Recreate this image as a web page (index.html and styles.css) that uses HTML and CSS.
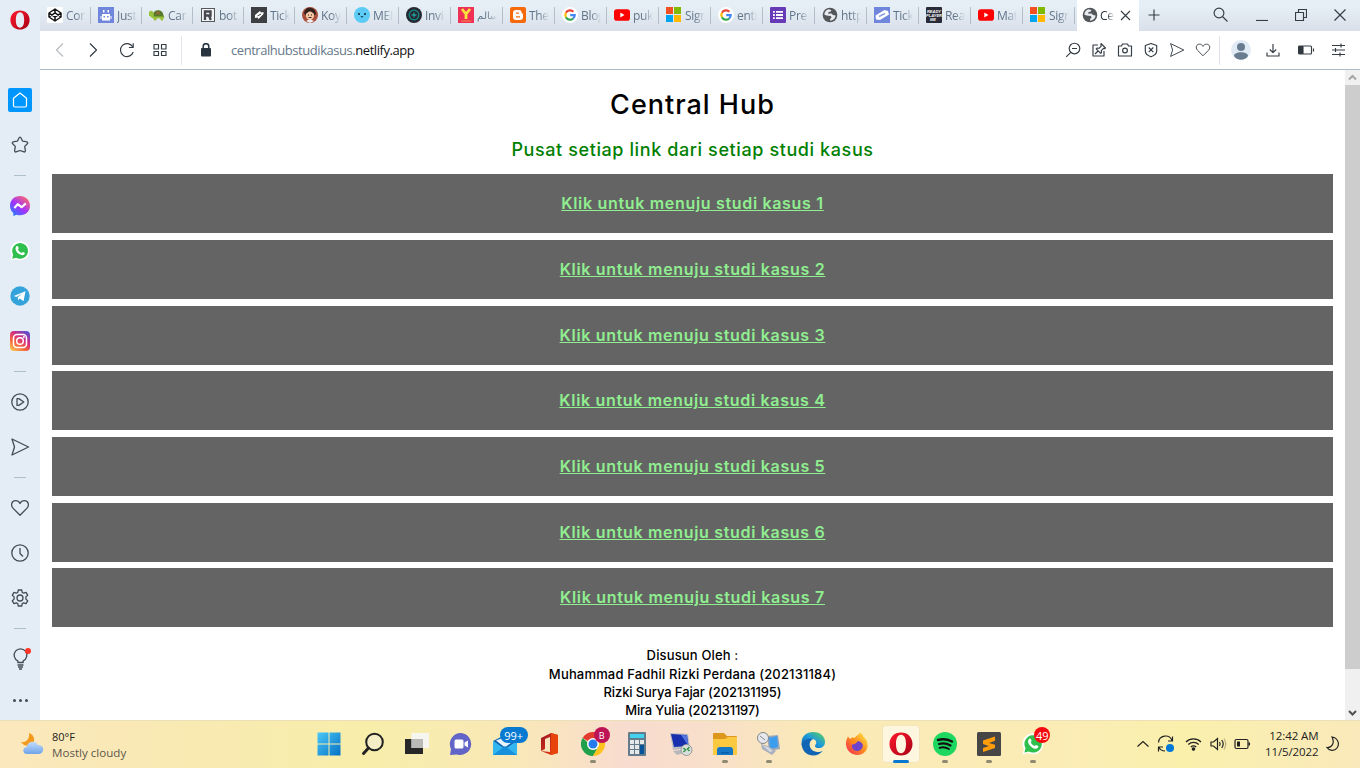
FILE: index.html
```html
<!DOCTYPE html>
<html lang="id">
<head>
<meta charset="utf-8">
<title>Central Hub</title>
<link rel="stylesheet" href="styles.css">
</head>
<body>
<svg class="defs" width="0" height="0">
  <defs>
    <linearGradient id="gOpera" x1="0" y1="0" x2="1" y2="1"><stop offset="0" stop-color="#ff1b2d"/><stop offset="1" stop-color="#a70014"/></linearGradient>
    <linearGradient id="gMsg" x1="0" y1="1" x2=".8" y2="0"><stop offset="0" stop-color="#0a8cff"/><stop offset=".5" stop-color="#a033ff"/><stop offset="1" stop-color="#ff6a6a"/></linearGradient>
    <linearGradient id="gIg" x1=".1" y1="1" x2=".8" y2="0"><stop offset="0" stop-color="#fdc950"/><stop offset=".35" stop-color="#f5653c"/><stop offset=".65" stop-color="#d42d82"/><stop offset="1" stop-color="#5b4fd0"/></linearGradient>
    <linearGradient id="gWin" x1="0" y1="0" x2="1" y2="1"><stop offset="0" stop-color="#4dc8f7"/><stop offset="1" stop-color="#0571c5"/></linearGradient>
    <linearGradient id="gEdge" x1="0" y1="1" x2="1" y2="0"><stop offset="0" stop-color="#0c59a4"/><stop offset=".5" stop-color="#1e9bdc"/><stop offset="1" stop-color="#62d452"/></linearGradient>
    <linearGradient id="gFox" x1="1" y1="0" x2="0" y2="1"><stop offset="0" stop-color="#fff04a"/><stop offset=".5" stop-color="#ff8a1e"/><stop offset="1" stop-color="#ef2259"/></linearGradient>
    <linearGradient id="gOffice" x1="0" y1="0" x2="1" y2="1"><stop offset="0" stop-color="#9c1222"/><stop offset="1" stop-color="#ef4a10"/></linearGradient>
    <linearGradient id="gCloud" x1="0" y1="0" x2="0" y2="1"><stop offset="0" stop-color="#c4dcfb"/><stop offset="1" stop-color="#6fa4ea"/></linearGradient>
    <symbol id="opera" viewBox="0 0 24 24"><path fill="url(#gOpera)" fill-rule="evenodd" d="M12 .5C5.200.5.500 5.300.500 12S5.200 23.500 12 23.500 23.500 18.700 23.500 12 18.800.5 12 .5ZM12 2.800C15.300 2.800 17 6.500 17 12S15.300 21.200 12 21.200 7 17.500 7 12 8.700 2.800 12 2.800Z"/></symbol>
    <symbol id="google" viewBox="0 0 16 16"><circle cx="8" cy="8" r="8" fill="#fff"/><g fill="none" stroke-width="2.200"><path stroke="#ea4335" d="M3.900 5.800A4.700 4.700 0 0 1 11.400 4.700"/><path stroke="#fbbc05" d="M3.900 5.800a4.700 4.700 0 0 0 0 4.400"/><path stroke="#34a853" d="M3.900 10.200a4.700 4.700 0 0 0 7.300 1.300"/><path stroke="#4285f4" d="M8.200 8.200h4.500a4.700 4.700 0 0 1-1.500 3.300"/></g></symbol>
    <symbol id="youtube" viewBox="0 0 16 16"><rect y="2.300" width="16" height="11.400" rx="2.800" fill="#f00"/><path fill="#fff" d="M6.300 5.600v4.800L10.500 8z"/></symbol>
    <symbol id="ms" viewBox="0 0 16 16"><path fill="#f25022" d="M0 0h7v7H0z"/><path fill="#7fba00" d="M8 0h7v7H8z"/><path fill="#00a4ef" d="M0 8h7v7H0z"/><path fill="#ffb900" d="M8 8h7v7H8z"/></symbol>
    <symbol id="globe" viewBox="0 0 16 16"><circle cx="8" cy="8" r="7.300" fill="#54575a"/><path fill="#e8ecf1" d="M6.500 2.200C4 3 2.500 5 2.300 7.500L4.500 8.600l4.300.4.800 1.500-1.300 1.200-.3 2.100c3-.1 5.300-2.300 5.600-5.200L11 8 9.500 6.500l-3 .2-.3-1.500 2.600-.8.500-1.500z"/></symbol>
    <symbol id="wa" viewBox="0 0 20 20"><path fill="#fff" d="M.5 19.500 1.700 14.500A9.500 9.500 0 1 1 5.500 18.200Z"/><path fill="#2fbf4c" d="M2.200 17.800l1-4A7.900 7.900 0 1 1 6.200 16.800Z"/><path fill="#fff" d="M6.300 5.400c.6-.7 1.500-.6 1.800.2l.6 1.500c.2.500-.6 1-.7 1.400.6 1.500 1.800 2.700 3.400 3.400.5-.1 1-1.100 1.500-.9l1.600.8c.6.300.3 1.300-.2 1.800-1.200 1.200-3.300.7-5.200-.5-1.700-1.100-3.200-3-3.500-4.700-.2-1.200.1-2.300.7-3z"/></symbol>
    <symbol id="heart" viewBox="0 0 20 20"><path d="M10 17.200 3.200 10.400C0 6.700 2 2.700 5.600 2.700 7.800 2.700 9.200 3.900 10 5.500 10.800 3.900 12.200 2.700 14.400 2.700c3.600 0 5.600 4 2.400 7.700Z"/></symbol>
    <symbol id="send" viewBox="0 0 20 20"><path d="M2 2 18.500 10 2 18 4.500 10Z"/></symbol>
  </defs>
</svg>

<div class="browser">
  <aside class="sidebar">
    <div class="side-logo"><svg width="20" height="20"><use href="#opera"/></svg></div>
    <div class="side-item"><span class="home"><svg class="ln light" width="20" height="20" viewBox="0 0 20 20"><path d="M3.500 8.300 10 3l6.500 5.300V15.500a1.500 1.500 0 0 1-1.500 1.500H5a1.500 1.500 0 0 1-1.500-1.500Z"/></svg></span></div>
    <div class="side-item"><svg class="ln" width="20" height="20" viewBox="0 0 20 20"><path d="M10 2.200c.7 0 1 .6 1.400 1.500l1.100 2.400 3.400.5c2 .3 2.400 1.300 1.200 2.400l-2.400 2.400.6 3.700c.3 1.800-.5 2.300-2 1.600L10 15.500l-3.300 1.200c-1.500.7-2.300.2-2-1.600l.6-3.700L2.900 9c-1.200-1.100-.8-2.100 1.200-2.400l3.400-.5 1.100-2.400C9 2.800 9.300 2.200 10 2.200Z"/></svg></div>
    <div class="side-sep"></div>
    <div class="side-item"><svg width="20" height="20" viewBox="0 0 20 20"><path fill="url(#gMsg)" d="M10 0C4.300 0 0 4.200 0 9.700c0 2.900 1.200 5.400 3.200 7.100L3.400 20l3-1.300c1.100.4 2.300.5 3.600.5 5.700 0 10-4.100 10-9.500S15.700 0 10 0Z"/><path fill="none" stroke="#fff" stroke-width="2.100" stroke-linejoin="round" d="m4.300 12 3.400-3.800 3.900 3 4.200-3.800"/></svg></div>
    <div class="side-item"><svg width="20" height="20"><use href="#wa"/></svg></div>
    <div class="side-item"><svg width="20" height="20" viewBox="0 0 20 20"><circle cx="10" cy="10" r="9.700" fill="#34a3dc"/><path fill="#fff" d="M3.800 9.900 15.500 5.200l-2 10-3.600-2.600-1.700 1.700-.5-3.100 4.700-3.900L6.400 11z"/></svg></div>
    <div class="side-item"><svg width="20" height="20" viewBox="0 0 20 20"><rect width="20" height="20" rx="4" fill="url(#gIg)"/><g fill="none" stroke="#fff" stroke-width="1.500"><rect x="3.500" y="3.500" width="13" height="13" rx="3.500"/><circle cx="10" cy="10" r="3.300"/></g><circle cx="13.900" cy="6.100" r="1" fill="#fff"/></svg></div>
    <div class="side-sep"></div>
    <div class="side-item"><svg class="ln" width="20" height="20" viewBox="0 0 20 20"><circle cx="10" cy="10" r="8.200"/><path d="M7 6.600v6.800h1.800L13.800 10 8.800 6.600Z"/></svg></div>
    <div class="side-item"><svg class="ln" width="20" height="20"><use href="#send"/></svg></div>
    <div class="side-sep"></div>
    <div class="side-item"><svg class="ln" width="20" height="20"><use href="#heart"/></svg></div>
    <div class="side-item"><svg class="ln" width="20" height="20" viewBox="0 0 20 20"><circle cx="10" cy="10" r="8.200"/><path d="M10 5v5.500l3 3"/></svg></div>
    <div class="side-item"><svg class="ln" width="20" height="20" viewBox="0 0 20 20"><circle cx="10" cy="10" r="3"/><path d="M8.300 2h3.400l.5 2.400 1.500.8 2.300-.9 1.700 2.900-1.800 1.700v2.200l1.800 1.700-1.700 2.900-2.300-.9-1.500.8-.5 2.400H8.300l-.5-2.400-1.500-.8-2.300.9-1.700-2.900 1.800-1.700V8.900L2.300 7.200 4 4.300l2.300.9 1.500-.8Z"/></svg></div>
    <div class="side-sep"></div>
    <div class="side-item bulb"><svg class="ln" width="20" height="22" viewBox="0 0 20 22"><path d="M7.800 14.500v-1.700A6.300 6.300 0 1 1 13.200 12.800v1.700ZM7.500 17h6M8 19h5M9 21h3"/></svg><i class="dot"></i></div>
    <div class="side-more"><i></i><i></i><i></i></div>
  </aside>

  <div class="main">
    <div class="tabs">
      <div class="tab narrow"><svg width="16" height="16" viewBox="0 0 16 16"><rect width="16" height="16" rx="1" fill="#fff"/><g fill="none" stroke="#111" stroke-width="1.500" stroke-linejoin="round"><path d="M8 2 14 6v4L8 14 2 10V6ZM8 2v3.800M8 10.200V14M2 6l6 4.200L14 6M2 10l6-4.200L14 10"/></g></svg><span>Cor</span></div>
      <div class="tab narrow"><svg width="16" height="16" viewBox="0 0 16 16"><rect width="16" height="16" fill="#6f86dc"/><path fill="#fff" d="M4 7h8v6.500H4zM5 3h1.500v2.500H5zM9.500 3H11v2.500H9.500zM2.500 9h1v3h-1zM12.500 9h1v3h-1z"/><path fill="#6f86dc" d="M5.500 9h1.500v1.500H5.500zM9 9h1.500v1.500H9z"/></svg><span>Just</span></div>
      <div class="tab narrow"><svg width="16" height="16" viewBox="0 0 16 16"><path fill="#557a2b" d="M4 8.500c0-7 10-7 10.500 0l1 2H4z"/><path fill="#9ac13c" d="M0 6c0-3 4-3 4.500 0l.5 3.500h10l-1 4h-2l-1-2H8l-1 2H5l-.5-2C2 11 2 9 0 9z"/><path fill="#8a6b35" d="m7 5 2-1 2 1v2L9 8 7 7z"/></svg><span>Car</span></div>
      <div class="tab narrow"><svg width="16" height="16" viewBox="0 0 16 16"><rect x="1.500" y="1.500" width="13" height="13" fill="#f3f4f6" stroke="#55595e"/><path fill="none" stroke="#45494f" stroke-width="2.400" d="M5 13V4.500h5.500v4H5M9 8.500l1.800 4.500"/></svg><span>bot</span></div>
      <div class="tab narrow"><svg width="16" height="16" viewBox="0 0 16 16"><rect width="16" height="16" fill="#3d3f42"/><path fill="#fff" d="m4 8 5-4 1 1.500 2.500-.5v2L7.500 12 6.500 10.500l-2.500.5z"/><path stroke="#3d3f42" d="m6.500 9 3.500-2"/></svg><span>Tick</span></div>
      <div class="tab"><svg width="16" height="16" viewBox="0 0 16 16"><circle cx="8" cy="8" r="8" fill="#a94d3b"/><path fill="#35211c" d="M2 6c1-7 11-7 12 1l-2 2H4z"/><circle cx="8" cy="8.500" r="4.200" fill="#f3c5a3"/><path fill="#35211c" d="M4 6.500 8 4l4 2.500V4L8 2 4 4z"/><path stroke="#3b2020" d="M6 8h1M9 8h1M6.500 10.500h3"/><path fill="#eee" d="m4 14 4-2 4 2-4 2z"/></svg><span>Koy</span></div>
      <div class="tab"><svg width="16" height="16" viewBox="0 0 16 16"><circle cx="8" cy="8" r="8" fill="#5ccbf5"/><circle cx="5" cy="7" r="1" fill="#123"/><circle cx="11" cy="7" r="1" fill="#123"/><path stroke="#123" fill="none" d="M6.800 9.500q1.200 1 2.400 0"/></svg><span>MEE</span></div>
      <div class="tab"><svg width="16" height="16" viewBox="0 0 16 16"><circle cx="8" cy="8" r="8" fill="#252a31"/><circle cx="8" cy="8" r="4.800" fill="none" stroke="#168d92" stroke-width="1.200"/><path fill="none" stroke="#2bb9ba" d="M8 5.500v5M5.500 8h5"/></svg><span>Invi</span></div>
      <div class="tab"><svg width="16" height="16" viewBox="0 0 16 16"><rect width="16" height="16" fill="#ee3154"/><path fill="none" stroke="#fbe23c" stroke-width="2.800" d="m4 2 4 5 4-5M8 7v5"/><path stroke="#f78d42" d="M3 14h10"/></svg><span class="arabic">سالم</span></div>
      <div class="tab"><svg width="16" height="16" viewBox="0 0 16 16"><rect width="16" height="16" rx="2" fill="#f76a0c"/><path fill="#fff" fill-rule="evenodd" d="M6 3h3c2 0 2.700 1.500 2.700 3.200C13 6.400 13 7 13 8v2a3 3 0 0 1-3 3H6a3 3 0 0 1-3-3V6a3 3 0 0 1 3-3ZM6 5.600v1.200h3V5.600ZM6 9.200v1.200h4V9.200Z"/></svg><span>The</span></div>
      <div class="tab"><svg width="16" height="16"><use href="#google"/></svg><span>Blog</span></div>
      <div class="tab"><svg width="16" height="16"><use href="#youtube"/></svg><span>puk</span></div>
      <div class="tab"><svg width="16" height="16"><use href="#ms"/></svg><span>Sign</span></div>
      <div class="tab"><svg width="16" height="16"><use href="#google"/></svg><span>enti</span></div>
      <div class="tab"><svg width="16" height="16" viewBox="0 0 16 16"><rect width="16" height="16" rx="1" fill="#673ab7"/><path stroke="#fff" stroke-width="1.800" d="M3 4.800h1.800M6 4.800h7M3 8h1.800M6 8h7M3 11.200h1.800M6 11.200h7"/></svg><span>Pre</span></div>
      <div class="tab"><svg width="16" height="16"><use href="#globe"/></svg><span>http</span></div>
      <div class="tab"><svg width="16" height="16" viewBox="0 0 16 16"><rect width="16" height="16" fill="#6f86dc"/><path fill="#fff" d="m1.500 8.500 9-5.500 3.500 1 1 3.500L6 13l-4-.5z"/><path stroke="#8ea0e4" stroke-width="1.500" d="m5 9.500 6-3"/></svg><span>Tick</span></div>
      <div class="tab"><svg width="16" height="16" viewBox="0 0 16 16"><rect width="16" height="16" rx="1" fill="#292b38"/><text class="ready" x="8" y="5.800">READY</text><text class="ready" x="8" y="9.800">PLAYER</text><text class="ready" x="7" y="13.600">ME</text></svg><span>Rea</span></div>
      <div class="tab"><svg width="16" height="16"><use href="#youtube"/></svg><span>Mat</span></div>
      <div class="tab"><svg width="16" height="16"><use href="#ms"/></svg><span>Sign</span></div>
      <div class="tab active"><svg width="16" height="16"><use href="#globe"/></svg><span>Ce</span><svg class="ln close" width="11" height="11" viewBox="0 0 11 11"><path d="m1 1 9 9M10 1l-9 9"/></svg></div>
      <svg class="ln plus" width="12" height="12" viewBox="0 0 12 12"><path d="M6 .5v11M.5 6h11"/></svg>
      <div class="window-tools">
        <svg class="ln" width="16" height="16" viewBox="0 0 16 16"><circle cx="6" cy="6" r="4.900"/><path d="m9.500 9.500 5 5"/></svg>
        <svg class="ln" width="12" height="14" viewBox="0 0 12 14"><path d="M0 13.500h12"/></svg>
        <svg class="ln" width="12" height="12" viewBox="0 0 12 12"><path d="M.5 3.500h8v8h-8zM3.500 3.500v-3h8v8h-3"/></svg>
        <svg class="ln" width="12" height="12" viewBox="0 0 12 12"><path d="m.5.500 11 11M11.500.500l-11 11"/></svg>
      </div>
    </div>

    <div class="toolbar">
      <div class="nav">
        <svg class="ln faded" width="20" height="20" viewBox="0 0 20 20"><path d="m13 3.500-6.500 6.500 6.500 6.500"/></svg>
        <svg class="ln" width="20" height="20" viewBox="0 0 20 20"><path d="m7 3.500 6.500 6.500L7 16.500"/></svg>
        <svg class="ln" width="20" height="20" viewBox="0 0 20 20"><path d="M16.200 12a6.500 6.500 0 1 1-.6-5.200M16.200 3.200v4.300h-4.300"/></svg>
        <svg class="ln" width="20" height="20" viewBox="0 0 20 20"><path d="M4 4.500h4.500V9H4zM11.500 4.500H16V9h-4.500zM4 11.500h4.500v4H4zM11.500 11.500H16v4h-4.500z"/></svg>
      </div>
      <div class="address">
        <svg width="10" height="14" viewBox="0 0 10 14"><rect y="5" width="10" height="8.500" rx="1" fill="#27333e"/><path fill="none" stroke="#27333e" stroke-width="1.500" d="M2.200 6V3.500a2.800 2.800 0 0 1 5.600 0V6"/></svg>
        <span class="url">centralhubstudikasus.<b>netlify.app</b></span>
      </div>
      <div class="actions">
        <svg class="ln" width="16" height="16" viewBox="0 0 16 16"><circle cx="9.500" cy="6.500" r="5.300"/><path d="M7 6.500h5M5.700 10.300 1.200 14.800"/></svg>
        <svg class="ln" width="16" height="16" viewBox="0 0 16 16"><path d="M7 3H2v11h11V9M10 1.500l4.500 4.500-1 .7-1-.3-2.200 2.200.2 2-.8.800-4.500-4.500.8-.8 2 .2 2.200-2.200-.3-1ZM7 9l-3 3"/></svg>
        <svg class="ln" width="16" height="16" viewBox="0 0 16 16"><path d="M1.500 4h3l1-2h5l1 2h3v10h-13Z"/><circle cx="8" cy="8.500" r="2.400"/></svg>
        <svg class="ln" width="16" height="16" viewBox="0 0 16 16"><path d="m8 1.500 5.700 2V9c0 3-2.700 4.700-5.700 5.800C5 13.700 2.300 12 2.300 9V3.500ZM5.700 5.500l4.600 4.600M10.300 5.500l-4.600 4.600"/></svg>
        <svg class="ln" width="16" height="16"><use href="#send"/></svg>
        <svg class="ln" width="16" height="16"><use href="#heart"/></svg>
      </div>
      <div class="profile">
        <svg width="20" height="20" viewBox="0 0 20 20"><circle cx="10" cy="10" r="10" fill="#e1ebf5"/><circle cx="10" cy="7" r="4" fill="#6a7c90"/><path fill="#6a7c90" d="M3 16c0-5 14-5 14 0-3 5-11 5-14 0Z"/></svg>
        <svg class="ln" width="14" height="14" viewBox="0 0 14 14"><path d="M7 1v8.500M3.800 6.500 7 9.700l3.200-3.200M1 9.500v3.500h12V9.500"/></svg>
        <svg class="ln" width="17" height="12" viewBox="0 0 17 12"><rect x=".5" y="2" width="13" height="8" rx="1"/><path fill="#30363c" d="M1 2.500h4v7H1zM15.500 4.500v3"/></svg>
        <svg class="ln" width="13" height="14" viewBox="0 0 13 14"><path d="M0 2.500h13M0 7h13M0 11.500h13M9 .5v4M3.500 5v4M8 9.500v4"/></svg>
      </div>
    </div>

    <div class="viewport">
      <main class="page">
        <h1>Central Hub</h1>
        <h2>Pusat setiap link dari setiap studi kasus</h2>
        <div class="cards">
          <a>Klik untuk menuju studi kasus 1</a>
          <a>Klik untuk menuju studi kasus 2</a>
          <a>Klik untuk menuju studi kasus 3</a>
          <a>Klik untuk menuju studi kasus 4</a>
          <a>Klik untuk menuju studi kasus 5</a>
          <a>Klik untuk menuju studi kasus 6</a>
          <a>Klik untuk menuju studi kasus 7</a>
        </div>
        <footer>
          <p class="lead">Disusun Oleh :</p>
          <p class="n1">Muhammad Fadhil Rizki Perdana (202131184)</p>
          <p class="n2">Rizki Surya Fajar (202131195)</p>
          <p class="n3">Mira Yulia (202131197)</p>
        </footer>
      </main>
      <div class="scroll">
        <svg width="15" height="15" viewBox="0 0 15 15"><path fill="none" stroke="#a6a6a6" stroke-width="2" d="m4 9.500 3.500-3.500L11 9.500"/></svg>
        <i class="thumb"></i>
        <svg width="15" height="15" viewBox="0 0 15 15"><path fill="none" stroke="#505050" stroke-width="2" d="M4 6l3.500 3.500L11 6"/></svg>
      </div>
    </div>
  </div>
</div>

<div class="taskbar">
  <div class="weather">
    <svg width="26" height="24" viewBox="0 0 26 24"><path fill="#f39a1d" d="M9 1c6 2 7 9 2 12C7 15 3 13 1 10c5 1 9-3 8-9Z"/><path fill="url(#gCloud)" d="M7 22c-5 0-5-7 0-7 0-6 9-7 11-2 7-1 7 9 0 9Z"/></svg>
    <div><p class="temp">80°F</p><p class="sky">Mostly cloudy</p></div>
  </div>
  <div class="apps">
    <div class="app"><svg width="24" height="24" viewBox="0 0 24 24"><path fill="url(#gWin)" d="M0.500.500h11v11H.5zM12.500.500h11v11h-11zM.5 12.500h11v11H.5zM12.500 12.500h11v11h-11z"/></svg></div>
    <div class="app"><svg width="24" height="24" viewBox="0 0 24 24"><circle cx="13.500" cy="10" r="8.300" fill="#f5edc6" stroke="#222" stroke-width="2"/><path stroke="#222" stroke-width="3" stroke-linecap="round" d="m7.500 16-5 5.500"/></svg></div>
    <div class="app"><svg width="24" height="24" viewBox="0 0 24 24"><path fill="#272727" d="M0 7h18v15H0z"/><path fill="#f5f5f5" fill-opacity=".93" d="M6.500 1H24v15H6.500z"/><path fill="#b9b9b7" d="M6.500 7H18v9H6.500z"/></svg></div>
    <div class="app"><svg width="24" height="24" viewBox="0 0 24 24"><path fill="#6264c7" d="M12 1a11 11 0 1 1-4 21.500l-7 .5 1-6A11 11 0 0 1 12 1Z"/><rect x="5.500" y="7.500" width="9" height="9" rx="1.500" fill="#fff"/><path fill="#fff" d="m15.500 10.500 3.500-2v7l-3.500-2z"/></svg></div>
    <div class="app"><svg width="24" height="24" viewBox="0 0 24 24"><path fill="#0b64b3" d="M0 9 12 3l12 6-12 9z"/><path fill="#e8f4fb" d="m3 8.500 9-3.500 9 3.500-9 7z"/><path fill="#32b6ef" d="M0 9v14h24V9l-12 8z"/><path fill="#188fda" d="m0 23 12-9 12 9z"/></svg><span class="badge blue">99+</span></div>
    <div class="app"><svg width="24" height="24" viewBox="0 0 24 24"><path fill="url(#gOffice)" fill-rule="evenodd" d="M4 6 14 1l7 2v18l-7 2-10-4 9 1V5L8 7v10l-4 2Z"/><path fill="#e8430b" d="m14 1 7 2v18l-7 2z"/></svg></div>
    <div class="app run"><svg width="24" height="24" viewBox="0 0 24 24"><path fill="#e33b2e" d="M12 12 1.600 6A12 12 0 0 1 22.400 6Z"/><path fill="#20a04b" d="M1.600 6A12 12 0 0 0 12 24l5.200-9H12Z"/><path fill="#fcc31e" d="M22.400 6A12 12 0 0 1 12 24l5.200-9V6Z"/><circle cx="12" cy="12" r="6" fill="#fff"/><circle cx="12" cy="12" r="4.500" fill="#267cec"/></svg><span class="badge crimson">B</span></div>
    <div class="app"><svg width="20" height="24" viewBox="0 0 20 24"><rect x="1" width="18" height="24" rx="1" fill="#647b8b"/><path fill="#43d1ee" d="M3 2h14v4H3z"/><path fill="#e4e8e9" d="M3 8h4v4H3zM8 8h4v4H8zM13 8h4v4h-4zM3 13h4v4H3zM8 13h4v4H8zM3 18h4v4H3zM8 18h4v4H8z"/><path fill="#08549b" d="M13 13h4v9h-4z"/></svg></div>
    <div class="app"><svg width="24" height="24" viewBox="0 0 24 24"><path fill="#b9bcc4" d="m1 1 18 1 2 14-17 2z"/><path fill="#172fad" d="m2 2 16 1 1.500 11L5 15z"/><path fill="#5474dd" d="m12 3 6 .3L19.500 14z"/><path fill="#b6b8ba" d="m4 19 8-1 3 3-7 2z"/><circle cx="17.500" cy="18" r="5.500" fill="#dbdfdb" stroke="#979c9a"/><path fill="none" stroke="#329149" stroke-width="1.500" d="m14.500 16 2 2-2 2M20.500 15l-2 2 2 2"/></svg></div>
    <div class="app run"><svg width="24" height="24" viewBox="0 0 24 24"><path fill="#dd971c" d="M0 2a1 1 0 0 1 1-1h10l3 3h9a1 1 0 0 1 1 1v7H0z"/><path fill="#fbc940" d="M0 7h12l3-2h9v18H0z"/><path fill="#1677c7" d="M4 23v-5a3 3 0 0 1 3-3h10a3 3 0 0 1 3 3v5Z"/><path fill="#0d5ca8" d="M8 20h8v1.500H8z"/></svg></div>
    <div class="app run"><svg width="24" height="24" viewBox="0 0 24 24"><path fill="#9ba5b9" d="m10 4 11-1 2 14-11 2z"/><path fill="#3d9ded" d="m12 6 8-2 1 11-8 2z"/><path fill="#a9afbc" d="m4 12 7 2 8 5-4 4-10-6z"/><path fill="#d3d7df" d="m5 13 6 2 5 4-3 1z"/><circle cx="6" cy="6" r="5.500" fill="#e6e8eb" stroke="#80858c"/><path stroke="#80858c" d="m3 4 5 4"/></svg></div>
    <div class="app"><svg width="24" height="24" viewBox="0 0 24 24"><path fill="url(#gEdge)" d="M1 14C-1 5 5 0 12 0c8 0 12 5 12 10 0 4-3 6-6 6-4 0-5-2-3-4 1-3-1-5-4-5-4 0-8 3-10 7Z"/><path fill="#1265b4" d="M.5 12C3 7 8 6 12 7c-5 2-5 12 4 13 2 .2 4-.4 6-1.500C17 26 2 26 .5 12Z"/></svg></div>
    <div class="app"><svg width="24" height="24" viewBox="0 0 24 24"><path fill="url(#gFox)" d="M15 .500c3 2 3 3 4 5 2 1 4 5 3.500 9C21 26 3 26 1 13 .7 10 1.500 7 3 4.500L5 7c1-1 3-2 5-1 0-2 4-3 5-5.500Z"/><path fill="#7043cb" d="M7 12c3 1 4-1 6-3 8 2 5 10-1 10-3 0-6-3-5-7Z"/><path fill="#ff8a1c" d="M5 9c3-1 5 0 6 2-2 0-3 1-3 2Z"/></svg></div>
    <div class="app current"><svg width="24" height="24"><use href="#opera"/></svg></div>
    <div class="app run"><svg width="24" height="24" viewBox="0 0 24 24"><circle cx="12" cy="12" r="12" fill="#1ed760"/><g fill="none" stroke="#111" stroke-linecap="round"><path stroke-width="2.500" d="M5 8q7-2 14 1.500"/><path stroke-width="2.200" d="M6 12q6-1.700 11.500 1.500"/><path stroke-width="1.800" d="M6.500 15.800q5-1.500 9.500 1.200"/></g></svg></div>
    <div class="app run"><svg width="24" height="24" viewBox="0 0 24 24"><rect width="24" height="24" rx="1.500" fill="#464646"/><path fill="#ff9d0a" d="m6 8.500 12-4v4.300L12 11l6 1.800V16L6 20v-4l6-2-6-2z"/></svg></div>
    <div class="app run"><svg width="22" height="22"><use href="#wa"/></svg><span class="badge red">49</span></div>
  </div>
  <div class="tray">
    <svg class="ink" width="12" height="8" viewBox="0 0 12 8"><path d="m.5 6.500 5.500-5 5.500 5"/></svg>
    <svg class="ink" width="18" height="18" viewBox="0 0 18 18"><path d="M1.500 7.500A7 7 0 0 1 15 5.500M15.500 1.500v4.500H11M1.500 16.500v-4.500H6M2 12.500a7 7 0 0 0 6 3.500"/><circle cx="13" cy="13" r="4" fill="#0078d7" stroke="none"/></svg>
    <svg class="ink wifi" width="17" height="14" viewBox="0 0 17 14"><path d="M1 5a10.500 10.500 0 0 1 15 0M3.300 7.500a7.300 7.300 0 0 1 10.400 0M5.800 10a4 4 0 0 1 5.400 0"/><circle cx="8.500" cy="12" r="1.200" fill="#222"/></svg>
    <svg class="ink" width="17" height="14" viewBox="0 0 17 14"><path d="M1 5h2.500l4-3.500v11L3.500 9H1ZM9.500 5q1.500 2 0 4M11.700 3q3 4 0 8"/><path opacity=".3" d="M14 1.500q3.500 5.500 0 11"/></svg>
    <svg class="ink" width="17" height="12" viewBox="0 0 17 12"><rect x="1" y="1.500" width="13" height="9" rx="1.500"/><path fill="#222" stroke="none" d="M3 3.500h3v5H3zM14.500 4.500H16v3h-1.500z"/></svg>
    <div class="clock"><p>12:42 AM</p><p>11/5/2022</p></div>
    <svg class="ink" width="14" height="16" viewBox="0 0 14 16"><path d="M6 1c6 1 8 7 5 11-2.500 3.500-8 3-10-.5 5 .5 8-5 5-10.500Z"/></svg>
  </div>
</div>
</body>
</html>
```
FILE: styles.css
```css
* { box-sizing: border-box; }
body {
  margin: 0;
  width: 1360px;
  height: 768px;
  overflow: hidden;
  background: #fff;
  font-family: "Open Sans", "Noto Sans", sans-serif;
}
p, h1, h2 { margin: 0; }
svg { display: block; flex: none; }
.defs { position: absolute; }
.ln { fill: none; stroke: #343c44; stroke-width: 1.15; stroke-linejoin: round; }
.light { stroke: #fff; stroke-width: 1.2; }
.faded { stroke: #b8bcc0; }

.browser { display: flex; height: 720px; }

.sidebar { width: 40px; background: #e4edf5; display: flex; flex-direction: column; }
.sidebar .ln:not(.light) { stroke: #414c56; stroke-width: 1.3; }
.side-logo { height: 77.6px; padding: 10px 0 0 10px; }
.side-item { height: 45px; display: flex; align-items: center; justify-content: center; }
.home { width: 24px; height: 24px; border-radius: 2px; background: #0096ff; display: grid; place-items: center; }
.side-sep { height: 16px; display: flex; align-items: center; justify-content: center; }
.side-sep::before { content: ""; width: 12px; height: 1px; background: #aebfcc; }
.bulb { position: relative; }
.dot { position: absolute; left: 25px; top: 11px; width: 6px; height: 6px; border-radius: 50%; background: #ff3426; }
.side-more { height: 37px; display: flex; align-items: center; justify-content: center; gap: 3px; }
.side-more i { width: 3px; height: 3px; border-radius: 50%; background: #414c56; }

.main { width: 1320px; display: flex; flex-direction: column; }
.tabs { height: 31px; display: flex; background: linear-gradient(#e6eef6 20%, #d9e0e9); }
.tab { width: 52px; padding: 7px 0 0 7px; display: flex; gap: 3px; position: relative; }
.narrow { width: 51px; }
.tab::after { content: ""; position: absolute; right: 0; top: 7px; width: 1px; height: 17px; background: #b2bfcb; }
.tab span {
  width: 20px;
  overflow: hidden;
  white-space: nowrap;
  font-size: 12px;
  line-height: 17px;
  letter-spacing: -0.3px;
  color: #61758a;
  -webkit-mask-image: linear-gradient(90deg, #000 50%, transparent);
  mask-image: linear-gradient(90deg, #000 50%, transparent);
}
.tab .arabic { font-size: 10px; letter-spacing: 0; }
.ready { font: italic bold 4px "Liberation Sans", sans-serif; fill: #fff; text-anchor: middle; }
.active { width: 62px; margin-left: 2px; padding-left: 5px; background: #fff; }
.active::after { display: none; }
.tab.active span { width: 14px; color: #26333e; margin-left: -1px; }
.close { margin: 3px 0 0 3px; }
.plus { margin: 9px 0 0 9px; }
.window-tools { margin-left: auto; padding: 7px 14px 0 0; display: flex; gap: 27px; align-items: flex-start; }
.window-tools svg:nth-child(n+3) { margin-top: 2px; }

.toolbar { height: 39px; flex: none; background: #fff; border-bottom: 1px solid #aebac5; display: flex; align-items: center; }
.nav { width: 142px; height: 29px; padding-left: 10px; border-right: 1px solid #dfe5ea; display: flex; align-items: center; gap: 13.3px; }
.address { flex: 1; display: flex; align-items: center; padding-left: 19px; }
.url { margin-left: 20px; font-size: 13px; line-height: 18px; letter-spacing: -0.45px; color: #66788a; }
.url b { font-weight: 400; color: #111; }
.actions { display: flex; align-items: center; gap: 10px; padding-right: 8px; border-right: 1px solid #dfe5ea; height: 29px; }
.profile { display: flex; align-items: center; padding: 0 15px 0 11px; gap: 17px; }
.profile svg:nth-child(2) { margin-left: -2px; }
.profile svg:nth-child(3) { margin-left: 1px; }

.viewport { flex: 1; display: flex; min-height: 0; }
.page { flex: 1; padding: 0 12px; overflow: hidden; text-align: center; font-family: Inter, "Open Sans", sans-serif; font-weight: 500; color: #000; }
.page h1 { margin-top: 18px; font-size: 27px; line-height: 34px; font-weight: 500; letter-spacing: 1px; }
.page h2 { margin-top: 17px; font-size: 18px; line-height: 22px; font-weight: 500; letter-spacing: 0.6px; color: green; }
.cards { margin-top: 13.3px; display: grid; gap: 6.67px; }
.cards a { height: 59px; line-height: 59px; background: #646464; color: #90ee90; font-size: 16px; font-weight: 600; letter-spacing: 0.68px; text-decoration: underline; }
footer { margin-top: 19px; font-size: 13px; line-height: 18px; }
footer .lead { margin-bottom: 1px; letter-spacing: 0.15px; }
.n1 { letter-spacing: 0.17px; }
.n2 { letter-spacing: -0.11px; }
.n3 { letter-spacing: -0.18px; }

.scroll { width: 15px; background: #f0f0f0; display: flex; flex-direction: column; }
.thumb { height: 584px; background: #cdcdcd; margin-bottom: auto; }

.taskbar {
  height: 48px;
  position: relative;
  display: flex;
  border-top: 1px solid #ece0b8;
  background: linear-gradient(90deg, #fbe8bd 0, #f9e9b3 12%, #f8eeaa 27%, #f9e8b7 38%, #f8dccf 46%, #f8dfca 52%, #faeab6 60%, #fbecb6 78%, #faf0ac 87%, #fae9ba 100%);
}
.weather { width: 306.5px; padding: 8px 0 0 20px; display: flex; gap: 6px; }
.weather svg { margin-top: 3px; }
.weather p { font-size: 11px; line-height: 16px; color: #222; }
.weather .sky { color: #5c574c; font-size: 11.600px; }
.apps { display: flex; }
.app { width: 44.060px; height: 46px; display: flex; align-items: center; justify-content: center; position: relative; }
.run::after, .current::after { content: ""; position: absolute; bottom: 4px; left: 19px; width: 6px; height: 3px; border-radius: 2px; background: #8f8872; }
.current::before { content: ""; position: absolute; inset: 4px 3px 4px; border-radius: 4px; background: #fef6de; border: 1px solid #f2e4bd; }
.current svg { position: relative; }
.current::after { left: 14px; width: 16px; background: #0877cf; }
.badge { position: absolute; display: grid; place-items: center; color: #fff; font-size: 11px; line-height: 15px; border-radius: 9px; height: 16px; }
.blue { left: 17px; top: 6px; width: 28px; background: #0879d0; }
.crimson { left: 23px; top: 6px; width: 16px; background: #bd1456; font-size: 9px; }
.red { left: 23px; top: 6px; width: 16px; background: #f4090c; }
.tray { margin-left: auto; height: 46px; padding-right: 20px; display: flex; align-items: center; gap: 7.500px; }
.wifi { margin-left: 3px; }
.ink { fill: none; stroke: #222; stroke-width: 1.2; }
.clock { width: 60px; text-align: right; font-size: 11.500px; line-height: 16px; color: #222; white-space: nowrap; letter-spacing: -0.1px; }
```
